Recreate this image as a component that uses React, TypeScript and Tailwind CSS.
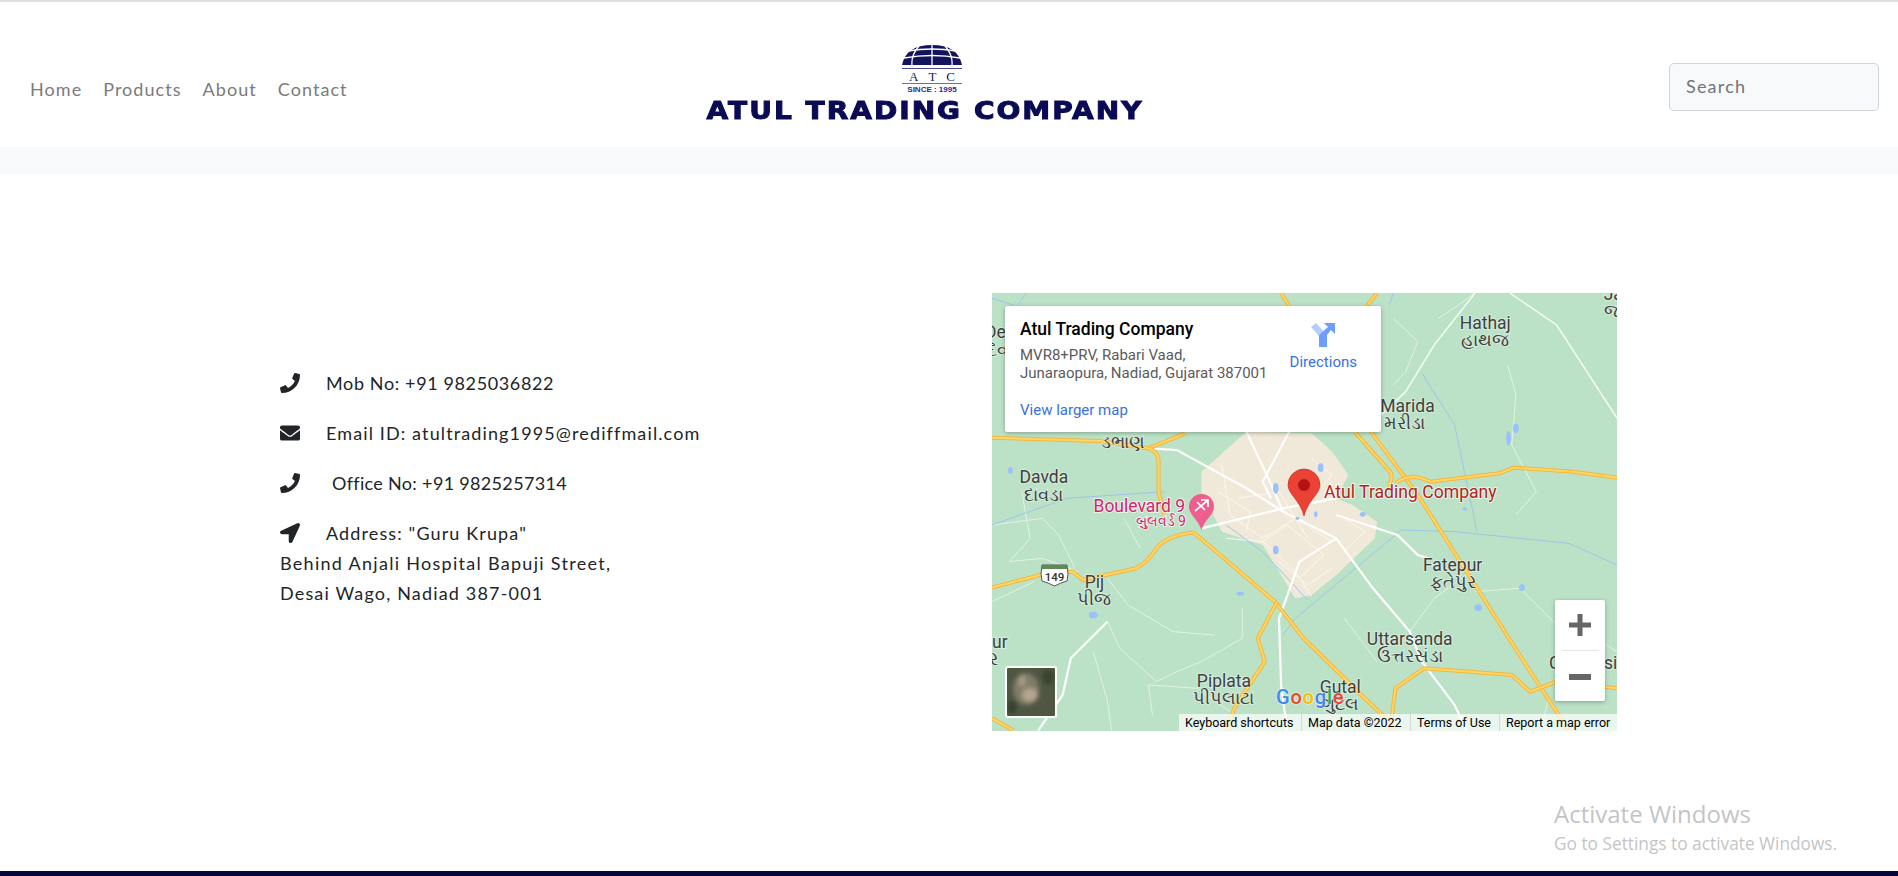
import { FaEnvelope, FaLocationArrow, FaPhone } from "react-icons/fa";

const navLinks = ["Home", "Products", "About", "Contact"];

// the road lists are in the coordinates of a 1531x1313 tracing of the map
const mx = (z: number) => (z - 17) / 2.449;
const my = (z: number) => (z - 24) / 3;

const orangeRoads = [
  "M17 458 L280 468 L400 490 L490 445",
  "M400 490 Q428 500 425 540 L425 620 L440 690",
  "M945 440 L1060 630 L1200 900 L1330 1150 L1430 1337",
  "M905 440 L995 565 Q1000 590 985 600",
  "M1005 595 Q1040 560 1090 590 L1260 565 L1295 548 L1440 560 L1548 578",
  "M17 908 L135 870 L215 860 L240 885 L370 850 Q400 830 420 790 Q440 755 510 742",
  "M510 742 L710 950 L780 1060 L930 1240 L990 1310 L1005 1337",
  "M715 950 L668 1060 L685 1130 L610 1270 L595 1337",
  "M992 1337 L1005 1210 L1075 1150 L1290 1170 L1335 1220 L1400 1190 L1548 1210",
  "M725 24 L745 63",
  "M960 24 L935 63",
  "M17 1300 L70 1337",
];

const whiteRoads = [
  "M400 490 L470 495 L640 610 L730 680",
  "M640 440 L690 570 L730 680",
  "M745 440 L680 590 L700 640",
  "M530 730 L730 670 L860 640",
  "M730 680 L860 760 L950 910 L1040 1040 L1070 1130 L1150 1260 L1180 1337",
  "M860 760 L770 830 L720 1000 L725 1200 L740 1337",
  "M300 1010 L210 1120 L190 1230 L130 1337",
  "M860 690 L960 730 L1010 750 L1060 810 L1085 820",
];

const minorRoads = [
  "M1200 24 L1100 180 L1030 320 L970 390",
  "M1285 24 L1400 120 L1548 400",
];

const thinRoads = [
  "M300 1010 L330 1090 L420 1190 L470 1160 L530 1130 L630 1060 L630 970",
  "M265 1100 L300 1250 L310 1337",
  "M410 1290 L400 1200 L520 1210 L600 1280",
  "M90 620 L110 760 L60 830 L140 820 L230 860",
  "M20 720 L140 700 L180 750 L220 850",
  "M17 950 L120 890",
  "M1110 100 L1160 60 L1200 24",
  "M1280 240 L1300 330 L1290 480 L1350 620 L1300 690",
  "M1040 1040 L1100 940 L1190 860",
  "M1200 920 L1310 910 L1400 1020 L1480 1240",
  "M1000 300 L1030 260 L1060 170 L1000 100",
  "M880 1000 L960 1130",
  "M340 700 L380 790 M300 880 L350 960 L460 1040 L560 1050",
  "M1380 1240 L1360 1337 M1470 1040 L1548 1100",
];

const townStreets = [
  "M590 760 L680 770 L760 860 L800 935",
  "M580 540 L600 690 L680 760 L760 700 L850 770",
  "M620 640 L720 620 L790 760",
  "M570 620 L650 680 L640 740",
  "M680 770 L740 720 L830 810 L770 880",
  "M720 830 L790 900 L850 850",
  "M800 520 L850 570 L800 640",
  "M880 700 L930 740 L880 800",
];

const blueLines = [
  "M1020 735 L1150 740 L1430 775 L1548 840",
  "M1020 735 L760 1000 L730 1050",
  "M1070 265 L1150 420 L1205 740",
  "M17 40 L70 60 M100 24 L80 60 M1000 24 L990 60",
  "M17 720 L200 640 L440 620",
  "M590 720 L680 800 L790 945",
];

const waterSpots = [
  [712, 610, 7, 16],
  [822, 548, 7, 13],
  [1282, 460, 6, 22],
  [1300, 430, 7, 14],
  [712, 795, 7, 13],
  [1208, 968, 9, 10],
  [265, 990, 11, 10],
  [1315, 908, 7, 10],
  [625, 926, 9, 6],
  [62, 556, 6, 10],
  [925, 688, 7, 7],
  [1175, 672, 6, 5],
  [810, 688, 4, 9],
  [765, 700, 5, 5],
];

const mapLabels = [
  { text: "Hathaj", x: 1225, y: 133 },
  { text: "હાથજ", x: 1225, y: 183 },
  { text: "મરીડા", x: 1028, y: 432 },
  { text: "ડભાણ", x: 337, y: 490 },
  { text: "Davda", x: 144, y: 595 },
  { text: "દાવડા", x: 144, y: 647 },
  { text: "Pij", x: 268, y: 908 },
  { text: "પીજ", x: 268, y: 960 },
  { text: "Fatepur", x: 1145, y: 858 },
  { text: "ફતેપુર", x: 1145, y: 910 },
  { text: "Uttarsanda", x: 1040, y: 1080 },
  { text: "ઉત્તરસંડા", x: 1040, y: 1132 },
  { text: "Piplata", x: 585, y: 1205 },
  { text: "પીપલાટા", x: 585, y: 1257 },
  { text: "Gutal", x: 870, y: 1223 },
  { text: "ગુટલ", x: 870, y: 1275 },
];

function Logo() {
  return (
    <div className="ml-[359px] flex w-[440px] flex-col items-center pt-[43px]">
      <div className="ml-[14px] flex w-[60px] flex-col items-center">
        <svg viewBox="0 0 60 20" className="h-[20px] w-[60px]">
          <path d="M0 20 Q4 0 30 0 Q56 0 60 20 Z" fill="#14145c" />
          <g fill="none" stroke="#fff" strokeWidth="1.3">
            <path d="M30 0 V20" />
            <path d="M17 1 Q9 10 10 20" />
            <path d="M43 1 Q51 10 50 20" />
            <path d="M6 6 Q30 2 54 6" />
            <path d="M2 13 Q30 8 58 13" />
          </g>
        </svg>
        <div className="mt-[3px] h-px w-full bg-[#4a4a9a]" />
        <div className="flex h-[14px] w-full items-center justify-between px-[7px] font-['Liberation_Serif',serif] text-[13px] leading-none text-[#20205f]">
          <span>A</span>
          <span>T</span>
          <span>C</span>
        </div>
        <div className="h-px w-full bg-[#6a6ab0]" />
        <div className="mt-px font-['Liberation_Sans',sans-serif] text-[8px] leading-[10px] font-bold whitespace-nowrap text-[#2b2b90]">
          SINCE : 1995
        </div>
      </div>
      <div className="mt-[3px] scale-x-[1.12] font-['DejaVu_Sans',sans-serif] text-[25px] leading-[25px] font-bold tracking-[1.8px] whitespace-nowrap text-[#0b0b55] [-webkit-text-stroke:1px_#0b0b55]">
        ATUL TRADING COMPANY
      </div>
    </div>
  );
}

function Header() {
  return (
    <header className="flex h-[145px] items-start bg-white">
      <nav className="flex w-[346px] shrink-0 gap-[21px] pt-[74px] pl-[30px] text-[18px] leading-[27px] tracking-[1.05px] text-[#7b7b7b]">
        {navLinks.map((link) => (
          <a key={link} href="#">
            {link}
          </a>
        ))}
      </nav>
      <Logo />
      <div className="mt-[61px] mr-[19px] ml-auto flex h-[48px] w-[210px] items-center rounded-[5px] border border-[#ced4da] bg-[#f8f9fa] pb-[2px] pl-4 text-[18px] tracking-[1.2px] text-[#6c757d]">
        Search
      </div>
    </header>
  );
}

function ContactInfo() {
  return (
    <div className="w-[992px] shrink-0 pt-[75px] pl-[280px] text-[18px] leading-[30px] text-[#212529]">
      <p className="mb-5 flex items-center tracking-[0.62px]">
        <FaPhone className="mr-[26px] h-5 w-5 shrink-0" />
        Mob No: +91 9825036822
      </p>
      <p className="mb-5 flex items-center tracking-[1.12px]">
        <FaEnvelope className="mr-[26px] h-5 w-5 shrink-0" />
        Email ID: atultrading1995@rediffmail.com
      </p>
      <p className="mb-5 flex items-center tracking-[0.32px]">
        <FaPhone className="mr-[32px] h-5 w-5 shrink-0" />
        Office No: +91 9825257314
      </p>
      <p className="flex items-center tracking-[1.12px]">
        <FaLocationArrow className="mr-[26px] h-5 w-5 shrink-0" />
        Address: "Guru Krupa"
      </p>
      <p className="tracking-[1.29px]">Behind Anjali Hospital Bapuji Street,</p>
      <p className="tracking-[1.17px]">Desai Wago, Nadiad 387-001</p>
    </div>
  );
}

function MapDrawing() {
  return (
    <svg viewBox="0 0 625 438" className="block h-[438px] w-[625px] font-['Roboto',sans-serif]">
      <defs>
        <filter id="sat-blur">
          <feGaussianBlur stdDeviation="2" />
        </filter>
        <clipPath id="sat-clip">
          <rect x="14" y="374" width="50" height="50" rx="2" />
        </clipPath>
      </defs>
      <rect width="625" height="438" fill="#bbe2c6" />
      <g transform="scale(0.4083 0.3333) translate(-17 -24)" fill="none">
        <path
          d="M640 440 L530 560 L530 620 L580 740 L680 780 L760 940 L800 930 L860 870 L955 760 L960 710 L900 660 L860 640 L890 570 L850 500 L800 445 Z"
          fill="#f0e9d9"
        />
        {townStreets.map((d) => (
          <path key={d} d={d} stroke="#fbf8f0" strokeWidth="1" vectorEffect="non-scaling-stroke" />
        ))}
        {thinRoads.map((d) => (
          <path key={d} d={d} stroke="#e2f2e4" strokeWidth="1" vectorEffect="non-scaling-stroke" />
        ))}
        {blueLines.map((d) => (
          <path key={d} d={d} stroke="#9fc5e8" strokeWidth="1" vectorEffect="non-scaling-stroke" />
        ))}
        {minorRoads.map((d) => (
          <path key={d} d={d} stroke="#f4fbf5" strokeWidth="1.5" vectorEffect="non-scaling-stroke" />
        ))}
        {whiteRoads.map((d) => (
          <path key={d} d={d} stroke="#fff" strokeWidth="2.2" vectorEffect="non-scaling-stroke" />
        ))}
        {orangeRoads.map((d) => (
          <g key={d}>
            <path d={d} stroke="#f4b63f" strokeWidth="4" vectorEffect="non-scaling-stroke" />
            <path d={d} stroke="#fdd665" strokeWidth="2" vectorEffect="non-scaling-stroke" />
          </g>
        ))}
        {waterSpots.map(([cx, cy, rx, ry]) => (
          <ellipse key={`${cx}-${cy}`} cx={cx} cy={cy} rx={rx} ry={ry} fill="#9cc0f9" />
        ))}
      </g>

      <g fontSize="17.500" textAnchor="middle" fill="#3f3f3f" stroke="#ffffff66" strokeWidth="2" paintOrder="stroke">
        {mapLabels.map((label) => (
          <text key={label.text} x={mx(label.x)} y={my(label.y)}>
            {label.text}
          </text>
        ))}
        <text x={mx(968)} y={my(380)} textAnchor="start">
          Marida
        </text>
        <text x={-7} y={my(160)} textAnchor="start">
          De
        </text>
        <text x={-5} y={my(212)} textAnchor="start">
          દેવ
        </text>
        <text x={0} y={my(1088)} textAnchor="start">
          ur
        </text>
        <text x={-3} y={my(1140)} textAnchor="start">
          ર
        </text>
        <text x={mx(1381)} y={my(1152)} textAnchor="start">
          C
        </text>
        <text x={mx(1516)} y={my(1152)} textAnchor="start">
          si
        </text>
        <text x={mx(1515)} y={my(45)} textAnchor="start">
          Ja
        </text>
        <text x={mx(1515)} y={my(95)} textAnchor="start">
          જા
        </text>
      </g>

      <g fontSize="17.500" stroke="#ffffffaa" strokeWidth="2" paintOrder="stroke">
        <text x={mx(490)} y={my(680)} textAnchor="end" fill="#d6246e">
          Boulevard 9
        </text>
        <text x={mx(492)} y={my(722)} textAnchor="end" fontSize="14" fill="#d6246e">
          બુલવર્ડ 9
        </text>
        <text x={mx(830)} y={my(638)} fontSize="17.600" fill="#b3231c">
          Atul Trading Company
        </text>
      </g>

      {/* boulevard pin */}
      <path d="M209.500 237 C206 226 197 222 197 213.500 A12.500 12.500 0 0 1 222 213.500 C222 222 213 226 209.500 237 Z" fill="#ee5f8e" />
      <path d="M203 218 L215 208 M209 207 L216 207 L216 214 M205 209 L213 217" stroke="#fff" strokeWidth="1.700" fill="none" />

      {/* place pin */}
      <path d="M312 223 C308 207 296 201 296 192 A16 16 0 0 1 328 192 C328 201 316 207 312 223 Z" fill="#ea4335" stroke="#c5221f" strokeWidth="0.600" />
      <circle cx="312" cy="192" r="6" fill="#b31412" />

      {/* highway shield */}
      <path d="M50 272 L75 272 Q77 282 75 288 Q68 290 62.500 293 Q57 290 50 288 Q48 282 50 272 Z" fill="#fff" stroke="#555" strokeWidth="1" />
      <path d="M50 272 L75 272 L75.500 276 L49.500 276 Z" fill="#5d8a55" />
      <text x="62.500" y="288" fontSize="11.500" fontWeight="500" textAnchor="middle" fill="#333">
        149
      </text>

      {/* google logo */}
      <text x="284" y="411" fontSize="20" fontWeight="500" stroke="#ffffff88" strokeWidth="1.500" paintOrder="stroke" letterSpacing="0.8">
        <tspan fill="#4285f4">G</tspan>
        <tspan fill="#ea4335">o</tspan>
        <tspan fill="#fbbc05">o</tspan>
        <tspan fill="#4285f4">g</tspan>
        <tspan fill="#34a853">l</tspan>
        <tspan fill="#ea4335">e</tspan>
      </text>

      {/* satellite thumbnail */}
      <g clipPath="url(#sat-clip)">
        <rect x="14" y="374" width="50" height="50" fill="#4f5743" />
        <g filter="url(#sat-blur)">
          <ellipse cx="34" cy="396" rx="13" ry="16" fill="#7f7b66" />
          <ellipse cx="38" cy="402" rx="8" ry="7" fill="#b5a48f" />
          <ellipse cx="30" cy="388" rx="4" ry="6" fill="#a49a85" />
          <ellipse cx="20" cy="414" rx="5" ry="7" fill="#39432f" />
          <ellipse cx="56" cy="384" rx="6" ry="8" fill="#39452f" />
        </g>
      </g>
      <rect x="14" y="374" width="50" height="50" rx="2" fill="none" stroke="#fff" strokeWidth="2" />
    </svg>
  );
}

function MapEmbed() {
  return (
    <div className="relative h-[438px] w-[625px] overflow-hidden font-['Roboto',sans-serif]">
      <MapDrawing />

      <div className="absolute top-[13px] left-[13px] flex h-[126px] w-[376px] justify-between rounded-[2px] bg-white pt-[12px] pr-[24px] pl-[15px] shadow-[0_1px_4px_rgba(0,0,0,0.3)]">
        <div>
          <div className="text-[17.500px] leading-[22px] font-medium text-black">Atul Trading Company</div>
          <div className="mt-[7px] text-[15px] leading-[17.500px] text-[#5b5b5b]">
            MVR8+PRV, Rabari Vaad,
            <br />
            Junaraopura, Nadiad, Gujarat 387001
          </div>
          <a href="#" className="mt-[20px] block text-[15px] leading-[17px] text-[#3871e0]">
            View larger map
          </a>
        </div>
        <div className="flex flex-col items-center pt-[5px]">
          <svg viewBox="0 0 24 24" className="h-[24px] w-[24px]">
            <path d="M0 4 L5 0 L13 9 L8 13 Z" fill="#b3cefb" />
            <path d="M8 24 V12 L17 4 L13 0 H24 V11 L20 7 L16 12 V24 Z" fill="#6d9eff" />
          </svg>
          <a href="#" className="mt-[6px] text-[15px] leading-[18px] text-[#3871e0]">
            Directions
          </a>
        </div>
      </div>

      <div className="absolute top-[307px] left-[563px] flex h-[101px] w-[50px] flex-col items-center rounded-[2px] bg-white shadow-[0_1px_4px_rgba(0,0,0,0.3)]">
        <svg viewBox="0 0 22 22" className="mt-[14px] h-[22px] w-[22px]">
          <path d="M8.500 0 H13.500 V8.500 H22 V13.500 H13.500 V22 H8.500 V13.500 H0 V8.500 H8.500 Z" fill="#666" />
        </svg>
        <div className="mt-[14px] h-px w-[37px] bg-[#e6e6e6]" />
        <svg viewBox="0 0 22 6" className="mt-[23px] h-[6px] w-[22px]">
          <path d="M0 0 H22 V6 H0 Z" fill="#666" />
        </svg>
      </div>

      <div className="absolute right-0 bottom-0 flex h-[17px] w-[438px] items-center bg-white/70 text-[12.500px] leading-[17px] text-black">
        <span className="w-[123px] border-r border-[#d7d7d7] pl-[6px]">Keyboard shortcuts</span>
        <span className="w-[109px] border-r border-[#d7d7d7] pl-[6px]">Map data ©2022</span>
        <span className="w-[89px] border-r border-[#d7d7d7] pl-[6px]">Terms of Use</span>
        <span className="pl-[6px] whitespace-nowrap">Report a map error</span>
      </div>
    </div>
  );
}

export default function App() {
  return (
    <div className="relative h-[876px] overflow-hidden bg-white font-['Lato',sans-serif]">
      <div className="h-[2px] bg-[#dedede]" />
      <Header />
      <div className="h-[27px] bg-[#f8f9fa]" />
      <main className="flex h-[697px] pt-[119px]">
        <ContactInfo />
        <MapEmbed />
      </main>
      <div className="h-[5px] bg-[#05053f]" />

      <div className="absolute top-[797px] left-[1554px] font-['Open_Sans',sans-serif] text-[#b4b4b4]/80">
        <div className="text-[24px] leading-[34px]">Activate Windows</div>
        <div className="text-[17.300px] leading-[26px]">Go to Settings to activate Windows.</div>
      </div>
    </div>
  );
}
